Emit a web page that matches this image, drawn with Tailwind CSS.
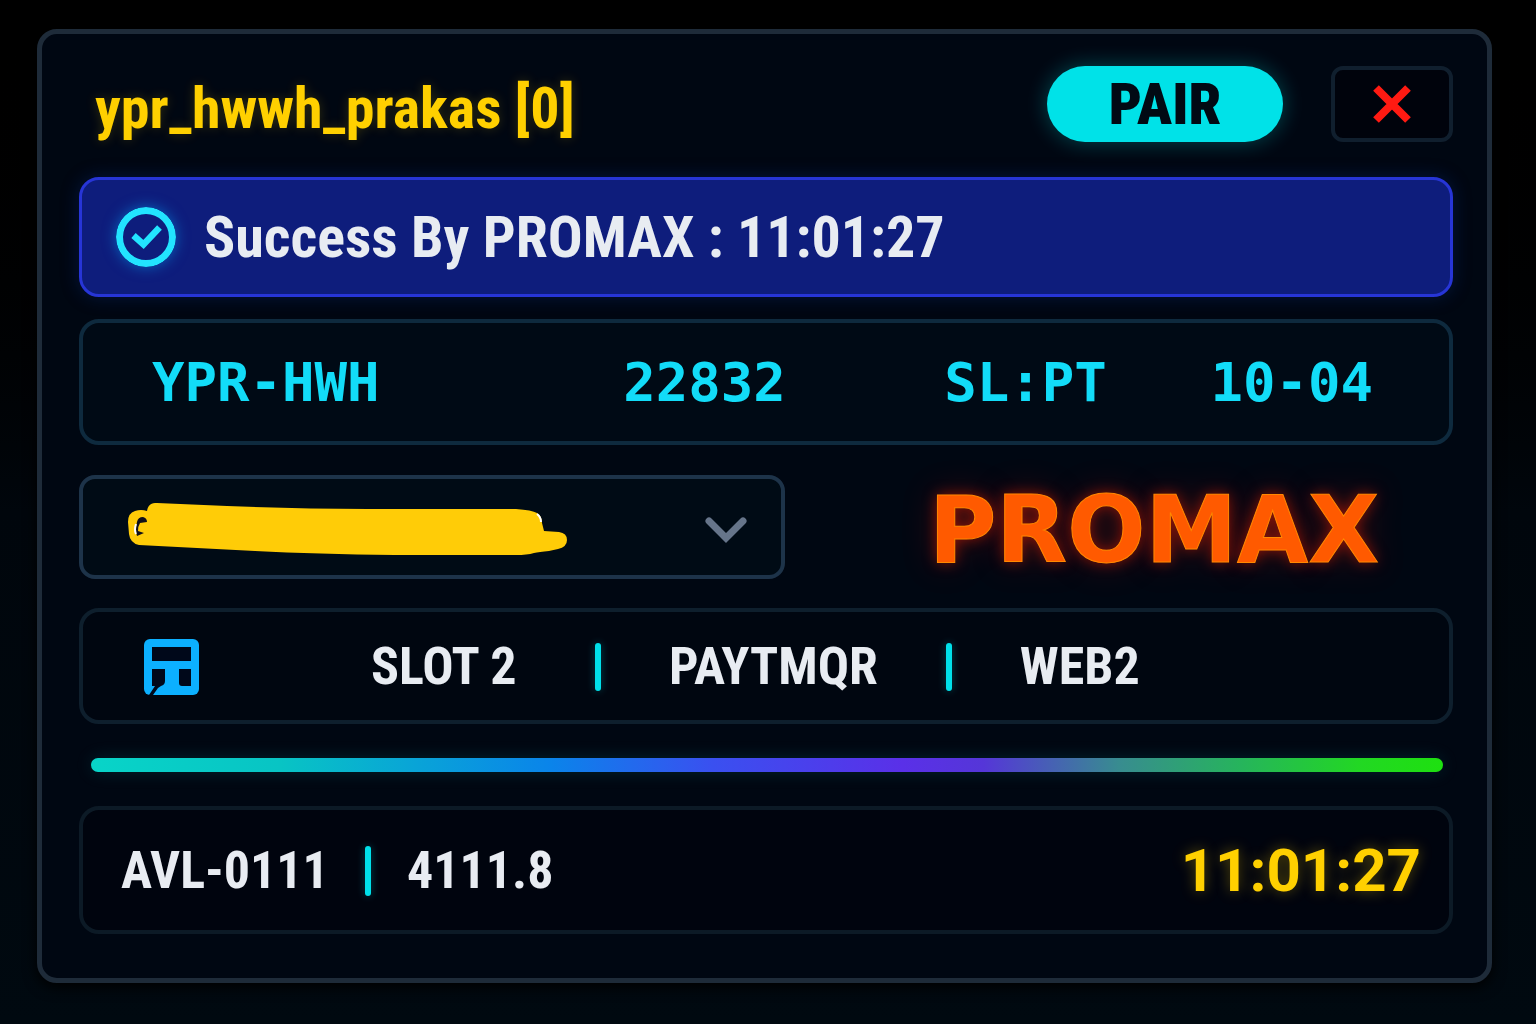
<!DOCTYPE html>
<html lang="en">

<head>
  <meta charset="UTF-8">
  <meta name="viewport" content="width=device-width, initial-scale=1.0">
  <title>PROMAX</title>
  <script src="https://cdn.jsdelivr.net/npm/@tailwindcss/browser@4"></script>
</head>

<body class="min-h-screen bg-linear-to-b from-black via-[#00060c] to-[#000910] pt-[29px] pb-10 pl-[37px] pr-[44px] font-['Roboto_Condensed','Roboto',sans-serif] font-bold text-[#e8ecf2]">

  <main class="rounded-[20px] border-[5px] border-[#1e2b39] bg-[#000712] pt-8 pr-[34px] pb-11 pl-[37px] shadow-[0_4px_14px_#000]">

    <!-- Header -->
    <header class="flex items-center">
      <h1 class="flex-1 pl-4 pt-2 text-[58px] leading-[64px] text-[#ffd000] [text-shadow:0_0_12px_#ffd00033]">ypr_hwwh_prakas [0]</h1>
      <button type="button" class="h-19 w-[236px] rounded-full bg-[#00e2e8] text-[58px] leading-none font-black text-[#010a14] shadow-[0_0_22px_#00e2e84d]">PAIR</button>
      <button type="button" aria-label="Close" class="ml-12 flex h-19 w-[122px] items-center justify-center rounded-xl border-4 border-[#101f2e] bg-[#00030c]">
        <svg class="h-10 w-10" viewBox="0 0 40 40" fill="none" stroke="#ff1a12" stroke-width="8">
          <path d="M4 4L36 36M36 4L4 36" />
        </svg>
      </button>
    </header>

    <!-- Status -->
    <section class="mt-[35px] flex h-30 items-center gap-7 rounded-[20px] border-[3px] border-[#2735d6] bg-[#0e1d7c] pl-[34px] shadow-[0_0_18px_#0a2a8066]">
      <svg class="h-[60px] w-[60px] rounded-full shadow-[0_0_14px_#00a8ff80]" viewBox="0 0 60 60" fill="none" stroke="#22e4ff">
        <circle cx="30" cy="30" r="26.5" stroke-width="7" />
        <path d="M17.5 28.5L27.5 37.5L43.5 20.5" stroke-width="6.5" />
      </svg>
      <p class="text-[58px] leading-[64px]">Success By PROMAX : 11:01:27</p>
    </section>

    <!-- Device info -->
    <section class="mt-[22px] grid h-[126px] grid-cols-[471fr_321fr_266fr_162fr] items-center rounded-[20px] border-4 border-[#0e2a3e] bg-[#000a15] pt-0.5 pr-[76px] pl-[69px] font-['DejaVu_Sans_Mono',monospace] text-[54px] leading-[64px] whitespace-nowrap text-[#12dcf8]">
      <span>YPR-HWH</span>
      <span>22832</span>
      <span>SL:PT</span>
      <span>10-04</span>
    </section>

    <!-- Account -->
    <section class="mt-[30px] flex items-center">
      <div class="relative w-[706px]">
        <select aria-label="Account" class="block h-[104px] w-full appearance-none rounded-2xl border-4 border-[#1d3349] bg-[#000b15] px-12 text-[52px]">
          <option></option>
        </select>
        <svg class="pointer-events-none absolute top-[27px] left-12 h-[54px] w-[441px]" viewBox="0 0 441 54">
          <path fill="#ffcc07" d="M20 9C21 3 24 1 30 1L100 4Q170 7 240 7L389 7Q405 8 410 11Q415 14 415 21L417 29L432 30Q440 31 440 38Q440 45 431 47L422 49Q412 50 407 51Q400 53 389 53L268 53Q190 52 128 49L12 43Q3 41 2 32L1 20Q1 11 8 9Q14 7 20 9Z" />
          <path fill="#10101a" d="M10 20Q11 15 16 15Q20 16 20 20L13 21Q11 24 11 29L17 31L10 34Q8 27 10 20Z" />
          <path fill="none" stroke="#fff" stroke-width="2" d="M9 22Q7 28 9 32M410 12Q414 15 414 20" />
        </svg>
        <svg class="pointer-events-none absolute top-[41px] right-[37px] h-7 w-11" viewBox="0 0 44 28" fill="none" stroke="#66758a" stroke-width="7" stroke-linecap="round">
          <path d="M5 5L22 22L39 5" />
        </svg>
      </div>
      <div class="flex-1 pt-2 pl-[70px] text-center font-['DejaVu_Sans',sans-serif] text-[92px] leading-[96px] text-[#ff5a00] [-webkit-text-stroke:1px_#ff8800] [text-shadow:0_0_14px_#ff200080,0_0_34px_#ff200040]">PROMAX</div>
    </section>

    <!-- Slot -->
    <section class="mt-[29px] flex h-[116px] items-center gap-[68px] rounded-[20px] border-4 border-[#0e1f2d] bg-[#000610] pt-0.5 pl-[61px] text-[52px] leading-[56px]">
      <svg class="mr-[104px] h-14 w-[55px]" viewBox="0 0 55 56">
        <rect width="55" height="56" rx="6" fill="#0cb0ff" />
        <path fill="#00081a" d="M8 8H47V22H8ZM8 30H21V42Q21 46 17 47L14 49L9 56H5L11 47H8ZM35 30H47V47H38Q35 47 35 44Z" />
      </svg>
      <span class="w-[156px]">SLOT 2</span>
      <span class="h-12 w-1.5 rounded-sm bg-[#00e0ea] shadow-[0_0_8px_#00e0ea4d]"></span>
      <span>PAYTMQR</span>
      <span class="h-12 w-1.5 rounded-sm bg-[#00e0ea] shadow-[0_0_8px_#00e0ea4d]"></span>
      <span>WEB2</span>
    </section>

    <div class="mr-[10px] ml-3 mt-[34px] h-3.5 rounded-full bg-[linear-gradient(90deg,#08d4c8_0%,#08c4c4_14%,#0a84ea_34%,#3a50f0_46%,#5a30e8_60%,#5536d8_66%,#388c90_76%,#26b45c_85%,#22d822_94%,#1ee010_100%)] shadow-[0_0_18px_#00c8c826]"></div>

    <!-- Balance -->
    <footer class="mt-[34px] flex h-32 items-center rounded-[20px] border-4 border-[#0c1a26] bg-[#00040e] pt-0.5 pr-7 pl-[38px] text-[52px] leading-[56px]">
      <span>AVL-0111</span>
      <span class="mx-9 h-[50px] w-1.5 rounded-sm bg-[#00e0ea] shadow-[0_0_8px_#00e0ea4d]"></span>
      <span>4111.8</span>
      <time class="ml-auto font-['Roboto',sans-serif] text-[60px] leading-[64px] text-[#ffd000] [text-shadow:0_0_14px_#ffd00059]">11:01:27</time>
    </footer>

  </main>

</body>

</html>
